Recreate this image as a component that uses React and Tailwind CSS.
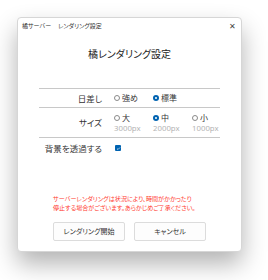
import React, { useState } from "react";

const jp = "[font-family:'Noto_Sans_CJK_JP','Noto_Sans',sans-serif] [font-feature-settings:'palt']";

function Radio({ checked }) {
  return checked ? (
    <span className="flex h-[6px] w-[6px] shrink-0 items-center justify-center rounded-full bg-[#0063b1]">
      <span className="h-[2px] w-[2px] rounded-full bg-white" />
    </span>
  ) : (
    <span className="h-[6px] w-[6px] shrink-0 rounded-full border border-[#8a8a8a] bg-white" />
  );
}

function Option({ checked, label, sub, onClick }) {
  return (
    <button type="button" onClick={onClick} className="flex w-[39px] shrink-0 flex-col items-start">
      <span className="flex items-center gap-[2px] text-[8px] leading-[10px] text-[#333]">
        <Radio checked={checked} />
        {label}
      </span>
      {sub && (
        <span className="mt-[1px] [font-family:'Noto_Sans',sans-serif] text-[7.8px] leading-[9px] text-[#b4b4b4]">
          {sub}
        </span>
      )}
    </button>
  );
}

export default function App() {
  const [sun, setSun] = useState("normal");
  const [size, setSize] = useState("mid");
  const [transparent, setTransparent] = useState(true);

  return (
    <div className={`min-h-screen bg-white pl-[17px] pt-[17px] ${jp}`}>
      <div className="flex h-[235px] w-[225px] flex-col rounded-[4px] border border-[#d6d6d6] bg-white shadow-[0_12px_24px_rgba(0,0,0,0.3)]">
        {/* Title bar */}
        <div className="flex h-[14px] items-center justify-between pl-[4px] pr-[5px] pt-[1px]">
          <span className="text-[6px] text-[#333]">
            橘サーバー<span className="ml-[7px]">レンダリング設定</span>
          </span>
          <span className="text-[8px] leading-none text-[#444]">✕</span>
        </div>

        <h1 className="mt-[15px] text-center text-[10px] leading-[14px] text-[#222]">橘レンダリング設定</h1>

        {/* Settings table */}
        <div className="ml-[21px] mt-[27px] w-[181px]">
          <div className="flex h-[20px] items-center border-y border-[#c8c8c8]">
            <span className="w-[63px] shrink-0 text-right text-[8.5px] text-[#333]">日差し</span>
            <div className="ml-[12px] flex">
              <Option checked={sun === "strong"} label="強め" onClick={() => setSun("strong")} />
              <Option checked={sun === "normal"} label="標準" onClick={() => setSun("normal")} />
            </div>
          </div>
          <div className="flex h-[30px] items-center border-b border-[#c8c8c8]">
            <span className="w-[63px] shrink-0 text-right text-[8.5px] text-[#333]">サイズ</span>
            <div className="ml-[12px] flex">
              <Option checked={size === "big"} label="大" sub="3000px" onClick={() => setSize("big")} />
              <Option checked={size === "mid"} label="中" sub="2000px" onClick={() => setSize("mid")} />
              <Option checked={size === "small"} label="小" sub="1000px" onClick={() => setSize("small")} />
            </div>
          </div>
          <div className="flex h-[20px] items-center">
            <span className="w-[63px] shrink-0 text-right text-[8.5px] text-[#333]">背景を透過する</span>
            <button
              type="button"
              onClick={() => setTransparent(!transparent)}
              className={`ml-[13px] flex h-[6px] w-[6px] items-center justify-center rounded-[1px] ${
                transparent ? "bg-[#0063b1]" : "border border-[#8a8a8a] bg-white"
              }`}
            >
              {transparent && (
                <svg viewBox="0 0 6 6" className="h-[5px] w-[5px]">
                  <path d="M1.2 3.1 2.4 4.2 4.8 1.8" fill="none" stroke="white" strokeWidth="0.8" />
                </svg>
              )}
            </button>
          </div>
        </div>

        <div className="mt-[36px] pl-[35px] text-[6.1px] leading-[9px] text-[#ff3b30]">
          <p>サーバーレンダリングは状況により、時間がかかったり</p>
          <p>停止する場合がございます。あらかじめご了承ください。</p>
        </div>

        <div className="mt-[10px] flex justify-center gap-[9px]">
          <button className="h-[19px] w-[72px] rounded-[2px] border border-[#dcdcdc] bg-[#fdfdfd] text-[7px] text-[#333]">
            レンダリング開始
          </button>
          <button className="h-[19px] w-[72px] rounded-[2px] border border-[#dcdcdc] bg-[#fdfdfd] text-[7px] text-[#333]">
            キャンセル
          </button>
        </div>
      </div>
    </div>
  );
}
